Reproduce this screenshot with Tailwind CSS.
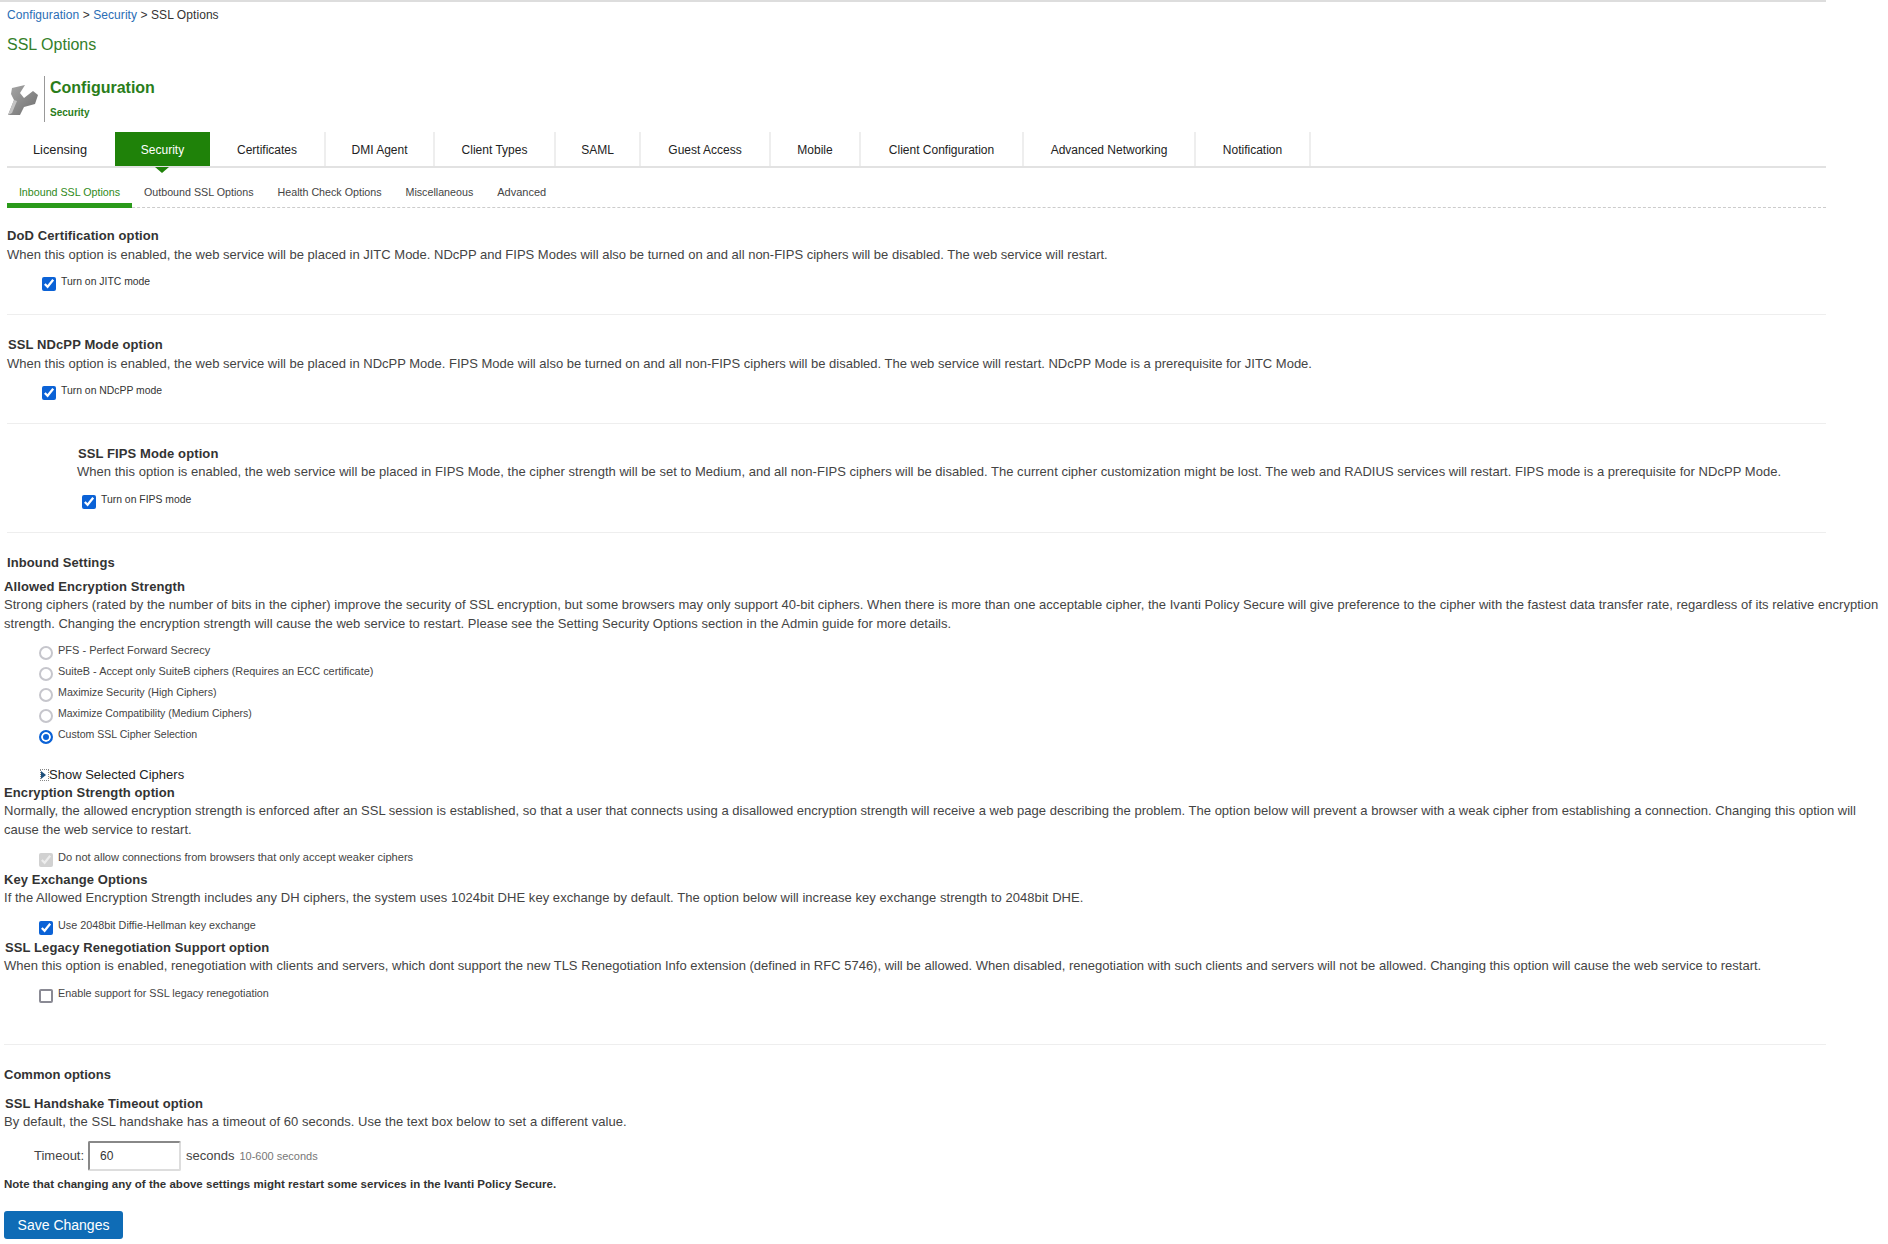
<!DOCTYPE html>
<html lang="en">
<head>
  <meta charset="UTF-8">
  <title>SSL Options</title>
  <script src="https://cdn.jsdelivr.net/npm/@tailwindcss/browser@4"></script>
</head>
<body class="bg-white font-['Liberation_Sans',Arial,sans-serif] text-[#333] h-[1244px] overflow-hidden">
  <div class="w-[1888px]">
    <div class="w-[1826px] h-[2px] bg-[#ddd]"></div>

    <!-- Breadcrumb -->
    <div class="h-[26px] pl-[7px] pt-[6px] text-[12px] leading-[15px] tracking-[0.07px] text-[#333]"><span class="text-[#2a6db5]">Configuration</span> &gt; <span class="text-[#2a6db5]">Security</span> &gt; SSL Options</div>
    <h1 class="h-[32px] pl-[7px] pt-[6px] text-[16px] leading-[22px] text-[#34802a]">SSL Options</h1>

    <!-- Header -->
    <div class="flex items-stretch mt-[16px] ml-[8px] h-[46px]">
      <div class="w-[36px] pt-[9px]">
        <svg width="30" height="30" viewBox="0 0 30 30">
          <defs>
            <linearGradient id="wr" x1="0" y1="0" x2="1" y2="1">
              <stop offset="0" stop-color="#a8a8a8"/>
              <stop offset="1" stop-color="#6e6e6e"/>
            </linearGradient>
          </defs>
          <path d="M4 3 L17 0 L12 8 L16 13 L25 6 L30 10 L27 19 L16 22 L12 30 L0 30 L6 15 L3 9 Z" fill="url(#wr)"/>
          <path d="M6 15 L9 16 L4 28 L0 30 Z" fill="#c4c4c4"/>
        </svg>
      </div>
      <div class="border-l border-[#999] pl-[5px]">
        <div class="text-[16px] leading-[20px] font-bold text-[#2a7d1a] pt-[2px]">Configuration</div>
        <div class="text-[10px] leading-[12px] font-bold text-[#2a7d1a] mt-[9px]">Security</div>
      </div>
    </div>

    <!-- Main tabs -->
    <div class="flex ml-[7px] w-[1819px] h-[36px] mt-[10px] border-b-2 border-[#e2e2e2] text-[12px] leading-[36px] text-[#222]">
      <div class="w-[108px] text-center text-[12.8px] pr-[2px]">Licensing</div>
      <div class="relative w-[95px] text-center bg-[#1f8209] text-white">Security<span class="absolute left-[40px] top-[35px] w-0 h-0 border-x-[7px] border-x-transparent border-t-[6px] border-t-[#1f8209]"></span></div>
      <div class="w-[116px] text-center border-r-2 border-[#eee]">Certificates</div>
      <div class="w-[109px] text-center border-r-2 border-[#eee]">DMI Agent</div>
      <div class="w-[121px] text-center border-r-2 border-[#eee]">Client Types</div>
      <div class="w-[85px] text-center border-r-2 border-[#eee]">SAML</div>
      <div class="w-[130px] text-center border-r-2 border-[#eee]">Guest Access</div>
      <div class="w-[90px] text-center border-r-2 border-[#eee]">Mobile</div>
      <div class="w-[163px] text-center border-r-2 border-[#eee]">Client Configuration</div>
      <div class="w-[172px] text-center border-r-2 border-[#eee]">Advanced Networking</div>
      <div class="w-[115px] text-center border-r-2 border-[#eee]">Notification</div>
    </div>

    <!-- Sub tabs -->
    <div class="flex ml-[7px] w-[1819px] h-[40px] border-b border-dashed border-[#ccc] text-[10.7px] leading-[14px] text-[#444]">
      <div class="h-[40px] w-[125px] text-center pt-[17px] text-[#2f8a1a] border-b-[5px] border-[#2a9a1a]">Inbound SSL Options</div>
      <div class="pt-[17px] px-[12px]">Outbound SSL Options</div>
      <div class="pt-[17px] px-[12px]">Health Check Options</div>
      <div class="pt-[17px] px-[12px]">Miscellaneous</div>
      <div class="pt-[17px] px-[12px] text-[11px]">Advanced</div>
    </div>

    <!-- DoD -->
    <section class="ml-[7px] w-[1819px] h-[107px] pt-[19px] border-b border-[#eee]">
      <h3 class="text-[13px] leading-[18px] font-bold tracking-[0.1px]">DoD Certification option</h3>
      <p class="text-[13px] leading-[20px] text-[#444]">When this option is enabled, the web service will be placed in JITC Mode. NDcPP and FIPS Modes will also be turned on and all non-FIPS ciphers will be disabled. The web service will restart.</p>
      <label class="flex items-start mt-[8px] ml-[35px] text-[10.4px] leading-[17px]"><input type="checkbox" checked class="w-[14px] h-[14px] m-0 mt-[4px] mr-[5px] accent-[#0b62d6]">Turn on JITC mode</label>
    </section>

    <!-- NDcPP -->
    <section class="ml-[7px] w-[1819px] h-[109px] pt-[21px] border-b border-[#eee]">
      <h3 class="pl-[1px] text-[13px] leading-[18px] font-bold tracking-[0.1px]">SSL NDcPP Mode option</h3>
      <p class="text-[13px] leading-[20px] text-[#444]">When this option is enabled, the web service will be placed in NDcPP Mode. FIPS Mode will also be turned on and all non-FIPS ciphers will be disabled. The web service will restart. NDcPP Mode is a prerequisite for JITC Mode.</p>
      <label class="flex items-start mt-[8px] ml-[35px] text-[10.4px] leading-[17px]"><input type="checkbox" checked class="w-[14px] h-[14px] m-0 mt-[4px] mr-[5px] accent-[#0b62d6]">Turn on NDcPP mode</label>
    </section>

    <!-- FIPS -->
    <section class="ml-[7px] w-[1819px] h-[109px] pt-[21px] pl-[70px] border-b border-[#eee]">
      <h3 class="pl-[1px] text-[13px] leading-[18px] font-bold tracking-[0.1px]">SSL FIPS Mode option</h3>
      <p class="-mt-[1px] text-[13px] leading-[20px] tracking-[0.028px] text-[#444]">When this option is enabled, the web service will be placed in FIPS Mode, the cipher strength will be set to Medium, and all non-FIPS ciphers will be disabled. The current cipher customization might be lost. The web and RADIUS services will restart. FIPS mode is a prerequisite for NDcPP Mode.</p>
      <label class="flex items-start mt-[9px] ml-[5px] text-[10.4px] leading-[17px]"><input type="checkbox" checked class="w-[14px] h-[14px] m-0 mt-[4px] mr-[5px] accent-[#0b62d6]">Turn on FIPS mode</label>
    </section>

    <!-- Inbound settings -->
    <div class="pl-[4px] w-[1888px]">
      <h3 class="pl-[3px] pt-[21px] text-[13px] leading-[18px] font-bold tracking-[0.1px]">Inbound Settings</h3>
      <h3 class="mt-[6px] text-[13px] leading-[18px] font-bold tracking-[0.1px]">Allowed Encryption Strength</h3>
      <p class="-mt-[1px] text-[13px] leading-[19px] tracking-[0.025px] text-[#444]">Strong ciphers (rated by the number of bits in the cipher) improve the security of SSL encryption, but some browsers may only support 40-bit ciphers. When there is more than one acceptable cipher, the Ivanti Policy Secure will give preference to the cipher with the fastest data transfer rate, regardless of its relative encryption strength. Changing the encryption strength will cause the web service to restart. Please see the Setting Security Options section in the Admin guide for more details.</p>
      <div class="mt-[10px] ml-[35px] flex flex-col gap-[9px] leading-[15px] text-[#444]">
        <label class="flex items-start h-[12px] text-[11px]"><input type="radio" name="enc" class="appearance-none w-[14px] h-[14px] m-0 mt-[3px] mr-[5px] rounded-full border-2 border-[#c6c6cc]">PFS - Perfect Forward Secrecy</label>
        <label class="flex items-start h-[12px] text-[10.9px]"><input type="radio" name="enc" class="appearance-none w-[14px] h-[14px] m-0 mt-[3px] mr-[5px] rounded-full border-2 border-[#c6c6cc]">SuiteB - Accept only SuiteB ciphers (Requires an ECC certificate)</label>
        <label class="flex items-start h-[12px] text-[10.7px]"><input type="radio" name="enc" class="appearance-none w-[14px] h-[14px] m-0 mt-[3px] mr-[5px] rounded-full border-2 border-[#c6c6cc]">Maximize Security (High Ciphers)</label>
        <label class="flex items-start h-[12px] text-[10.5px]"><input type="radio" name="enc" class="appearance-none w-[14px] h-[14px] m-0 mt-[3px] mr-[5px] rounded-full border-2 border-[#c6c6cc]">Maximize Compatibility (Medium Ciphers)</label>
        <label class="flex items-start h-[12px] text-[10.55px]"><input type="radio" name="enc" checked class="appearance-none w-[14px] h-[14px] m-0 mt-[3px] mr-[5px] rounded-full border-2 border-[#0b62d6] bg-[#0b62d6] shadow-[inset_0_0_0_2px_#fff]">Custom SSL Cipher Selection</label>
      </div>
      <div class="mt-[27px] mb-[1px] ml-[36px] flex items-center text-[13px] leading-[17px] text-[#222]">
        <span class="w-[9px] h-[12px] flex items-center border border-dotted border-[#888]"><span class="w-0 h-0 border-y-[4px] border-y-transparent border-l-[5px] border-l-[#1f4f7a]"></span></span>Show Selected Ciphers
      </div>

      <h3 class="text-[13px] leading-[18px] font-bold tracking-[0.1px]">Encryption Strength option</h3>
      <p class="-mt-[1px] text-[13px] leading-[19px] tracking-[0.016px] text-[#444]">Normally, the allowed encryption strength is enforced after an SSL session is established, so that a user that connects using a disallowed encryption strength will receive a web page describing the problem. The option below will prevent a browser with a weak cipher from establishing a connection. Changing this option will cause the web service to restart.</p>
      <label class="flex items-start mt-[10px] ml-[35px] h-[22px] text-[11.1px] leading-[17px] text-[#444]"><input type="checkbox" checked disabled class="w-[14px] h-[14px] m-0 mt-[4px] mr-[5px]">Do not allow connections from browsers that only accept weaker ciphers</label>

      <h3 class="text-[13px] leading-[18px] font-bold tracking-[0.1px]">Key Exchange Options</h3>
      <p class="-mt-[1px] text-[13px] leading-[19px] tracking-[0.044px] text-[#444]">If the Allowed Encryption Strength includes any DH ciphers, the system uses 1024bit DHE key exchange by default. The option below will increase key exchange strength to 2048bit DHE.</p>
      <label class="flex items-start mt-[10px] ml-[35px] h-[22px] text-[10.8px] leading-[17px] text-[#444]"><input type="checkbox" checked class="w-[14px] h-[14px] m-0 mt-[4px] mr-[5px] accent-[#0b62d6]">Use 2048bit Diffie-Hellman key exchange</label>

      <h3 class="pl-[1px] text-[13px] leading-[18px] font-bold tracking-[0.1px]">SSL Legacy Renegotiation Support option</h3>
      <p class="-mt-[1px] text-[13px] leading-[19px] text-[#444]">When this option is enabled, renegotiation with clients and servers, which dont support the new TLS Renegotiation Info extension (defined in RFC 5746), will be allowed. When disabled, renegotiation with such clients and servers will not be allowed. Changing this option will cause the web service to restart.</p>
      <label class="flex items-start mt-[10px] ml-[35px] h-[17px] text-[10.8px] leading-[17px] text-[#444]"><input type="checkbox" class="appearance-none w-[14px] h-[14px] m-0 mt-[4px] mr-[5px] rounded-[2px] border-2 border-[#8a8a94]">Enable support for SSL legacy renegotiation</label>

      <div class="mt-[42px] w-[1822px] border-t border-[#eee]"></div>

      <h3 class="mt-[21px] text-[13px] leading-[18px] font-bold">Common options</h3>
      <h3 class="mt-[11px] pl-[1px] text-[13px] leading-[18px] font-bold tracking-[0.1px]">SSL Handshake Timeout option</h3>
      <p class="-mt-[1px] text-[13px] leading-[19px] tracking-[0.044px] text-[#444]">By default, the SSL handshake has a timeout of 60 seconds. Use the text box below to set a different value.</p>
      <div class="flex items-center mt-[10px] ml-[30px] text-[13px] text-[#444]">
        <span class="w-[54px]">Timeout:</span>
        <input type="text" value="60" class="w-[93px] h-[30px] px-[10px] border-2 border-t-[#888] border-l-[#888] border-r-[#ddd] border-b-[#ddd] rounded-[2px] text-[12px] text-[#333] outline-none">
        <span class="ml-[5px]">seconds</span>
        <span class="ml-[5px] text-[11px] text-[#777]">10-600 seconds</span>
      </div>
      <p class="mt-[6px] text-[11.5px] leading-[14px] font-bold tracking-[0.02px]">Note that changing any of the above settings might restart some services in the Ivanti Policy Secure.</p>
      <button class="block mt-[20px] w-[119px] h-[28px] rounded-[3px] bg-[#0f6cb6] text-white text-[14px]">Save Changes</button>
    </div>
  </div>
</body>
</html>
